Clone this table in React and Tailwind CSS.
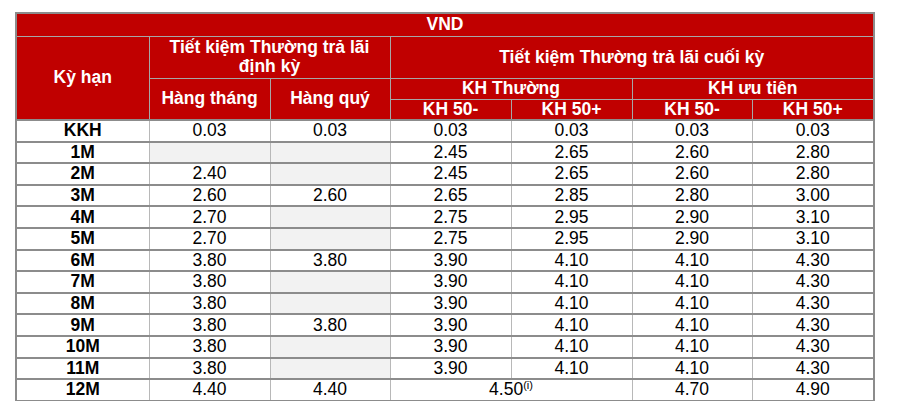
import React from 'react';

const rows = [
  ['KKH', '0.03', '0.03', '0.03', '0.03', '0.03', '0.03'],
  ['1M', null, null, '2.45', '2.65', '2.60', '2.80'],
  ['2M', '2.40', null, '2.45', '2.65', '2.60', '2.80'],
  ['3M', '2.60', '2.60', '2.65', '2.85', '2.80', '3.00'],
  ['4M', '2.70', null, '2.75', '2.95', '2.90', '3.10'],
  ['5M', '2.70', null, '2.75', '2.95', '2.90', '3.10'],
  ['6M', '3.80', '3.80', '3.90', '4.10', '4.10', '4.30'],
  ['7M', '3.80', null, '3.90', '4.10', '4.10', '4.30'],
  ['8M', '3.80', null, '3.90', '4.10', '4.10', '4.30'],
  ['9M', '3.80', '3.80', '3.90', '4.10', '4.10', '4.30'],
  ['10M', '3.80', null, '3.90', '4.10', '4.10', '4.30'],
  ['11M', '3.80', null, '3.90', '4.10', '4.10', '4.30'],
];

const th = 'bg-[#c00000] text-white font-bold border border-[#a6a6a6] text-center align-middle p-0';
const td = 'border-x border-x-[#b8b8b8] border-y-2 border-y-[#8c8c8c] text-center align-middle p-0 text-black';

export default function App() {
  return (
    <div className="bg-white w-[899px] h-[401px] overflow-hidden pl-[15px] pt-[12px]" style={{ fontFamily: '"Liberation Sans", Arial, sans-serif' }}>
      <table className="table-fixed border-collapse w-[858px] text-[17.5px] leading-[19px] border-2 border-[#8c8c8c]">
        <colgroup>
          <col className="w-[133px]" />
          <col className="w-[121px]" />
          <col className="w-[120px]" />
          <col className="w-[121px]" />
          <col className="w-[121px]" />
          <col className="w-[120px]" />
          <col className="w-[122px]" />
        </colgroup>
        <thead>
          <tr className="h-[23px]">
            <th colSpan={7} className={th}>VND</th>
          </tr>
          <tr className="h-[42px]">
            <th rowSpan={3} className={th}>Kỳ hạn</th>
            <th colSpan={2} className={`${th} px-2`}>Tiết kiệm Thường trả lãi định kỳ</th>
            <th colSpan={4} className={th}>Tiết kiệm Thường trả lãi cuối kỳ</th>
          </tr>
          <tr className="h-[21px]">
            <th rowSpan={2} className={th}>Hàng tháng</th>
            <th rowSpan={2} className={th}>Hàng quý</th>
            <th colSpan={2} className={th}>KH Thường</th>
            <th colSpan={2} className={th}>KH ưu tiên</th>
          </tr>
          <tr className="h-[21px]">
            <th className={th}>KH 50-</th>
            <th className={th}>KH 50+</th>
            <th className={th}>KH 50-</th>
            <th className={th}>KH 50+</th>
          </tr>
        </thead>
        <tbody>
          {rows.map((r) => (
            <tr key={r[0]} className="h-[21.6px]">
              <td className={`${td} font-bold`}>{r[0]}</td>
              {r.slice(1).map((v, i) => (
                <td key={i} className={`${td} ${v === null ? 'bg-[#f2f2f2]' : ''}`}>{v}</td>
              ))}
            </tr>
          ))}
          <tr className="h-[21.6px]">
            <td className={`${td} font-bold`}>12M</td>
            <td className={td}>4.40</td>
            <td className={td}>4.40</td>
            <td colSpan={2} className={td}>
              4.50<sup className="text-[11px] top-[-6px]">(i)</sup>
            </td>
            <td className={td}>4.70</td>
            <td className={td}>4.90</td>
          </tr>
        </tbody>
      </table>
    </div>
  );
}
